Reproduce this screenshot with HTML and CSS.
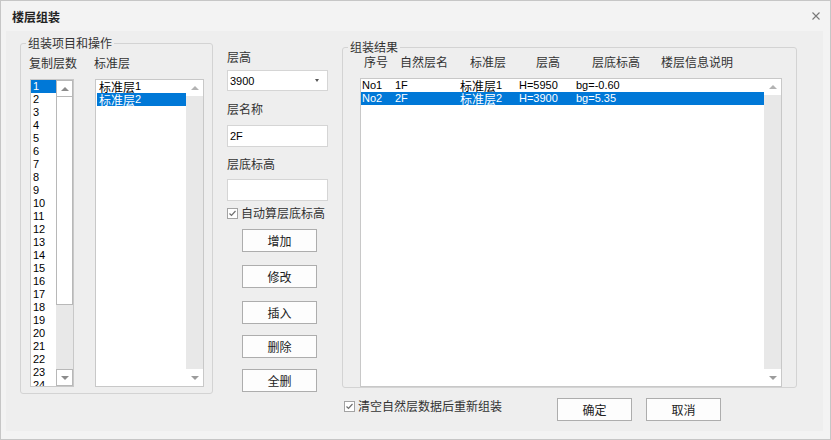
FILE: index.html
```html
<!DOCTYPE html>
<html>
<head>
<meta charset="utf-8">
<link rel="stylesheet" href="styles.css">
</head>
<body>
<div class="window">
  <div class="titlebar">
    <span class="title">楼层组装</span>
    <span class="close"><svg width="8" height="8" viewBox="0 0 8 8"><path d="M0.5 0.5L7.5 7.5M7.5 0.5L0.5 7.5" stroke="#777" stroke-width="1.1" fill="none"/></svg></span>
  </div>
  <div class="content">
    <div class="group left-group">
      <span class="legend">组装项目和操作</span>
      <div class="lg-cols">
        <div class="lg-col col-copy">
          <div class="glabel">复制层数</div>
          <div class="listbox lb-copy">
            <ul class="items">
              <li class="sel">1</li><li>2</li><li>3</li><li>4</li><li>5</li><li>6</li><li>7</li><li>8</li><li>9</li><li>10</li><li>11</li><li>12</li><li>13</li><li>14</li><li>15</li><li>16</li><li>17</li><li>18</li><li>19</li><li>20</li><li>21</li><li>22</li><li>23</li><li>24</li>
            </ul>
            <div class="sb enabled">
              <div class="sb-btn"><span class="tri-up"></span></div>
              <div class="thumb"></div>
              <div class="sb-track"></div>
              <div class="sb-btn"><span class="tri-down"></span></div>
            </div>
          </div>
        </div>
        <div class="lg-col col-std">
          <div class="glabel">标准层</div>
          <div class="listbox lb-std">
            <ul class="items">
              <li><span class="cjk">标准层</span><span>1</span></li>
              <li class="sel"><span class="cjk">标准层</span><span>2</span></li>
            </ul>
            <div class="sb">
              <div class="sb-btn"><span class="tri-up"></span></div>
              <div class="sb-track"></div>
              <div class="sb-btn"><span class="tri-down"></span></div>
            </div>
          </div>
        </div>
      </div>
    </div>

    <div class="mid">
      <div class="mlabel">层高</div>
      <div class="combo"><span>3900</span><span class="combo-arrow"></span></div>
      <div class="mlabel l2">层名称</div>
      <div class="field f1">2F</div>
      <div class="mlabel l3">层底标高</div>
      <div class="field f2"></div>
      <div class="check c1">
        <svg width="11" height="11" viewBox="0 0 11 11"><rect x="0.5" y="0.5" width="10" height="10" fill="#fff" stroke="#a3a3a3"/><path d="M2.5 5.5L4.5 7.5L8.5 3" stroke="#707070" stroke-width="1.2" fill="none"/></svg>
        <span>自动算层底标高</span>
      </div>
      <div class="mid-btns">
        <button class="btn">增加</button>
        <button class="btn g2">修改</button>
        <button class="btn g2">插入</button>
        <button class="btn">删除</button>
        <button class="btn">全删</button>
      </div>
    </div>

    <div class="right-col">
      <div class="group right-group">
        <span class="legend">组装结果</span>
        <div class="hdr">
          <span class="h1">序号</span>
          <span class="h2">自然层名</span>
          <span class="h3">标准层</span>
          <span class="h4">层高</span>
          <span class="h5">层底标高</span>
          <span class="h6">楼层信息说明</span>
        </div>
        <div class="listbox lb-res">
          <div class="rows">
            <div class="row">
              <span class="r1">No1</span><span class="r2">1F</span><span class="r3"><span class="cjk">标准层</span><span>1</span></span><span class="r4">H=5950</span><span class="r5">bg=-0.60</span>
            </div>
            <div class="row sel">
              <span class="r1">No2</span><span class="r2">2F</span><span class="r3"><span class="cjk">标准层</span><span>2</span></span><span class="r4">H=3900</span><span class="r5">bg=5.35</span>
            </div>
          </div>
          <div class="sb">
            <div class="sb-btn"><span class="tri-up"></span></div>
            <div class="sb-track"></div>
            <div class="sb-btn"><span class="tri-down"></span></div>
          </div>
        </div>
      </div>
      <div class="bottom">
        <div class="check c2">
          <svg width="11" height="11" viewBox="0 0 11 11"><rect x="0.5" y="0.5" width="10" height="10" fill="#fff" stroke="#a3a3a3"/><path d="M2.5 5.5L4.5 7.5L8.5 3" stroke="#707070" stroke-width="1.2" fill="none"/></svg>
          <span>清空自然层数据后重新组装</span>
        </div>
        <div class="actions">
          <button class="btn">确定</button>
          <button class="btn">取消</button>
        </div>
      </div>
    </div>
  </div>
</div>
</body>
</html>
```

FILE: styles.css
```css
* { box-sizing: border-box; }
html, body { margin: 0; padding: 0; }
body {
  width: 831px;
  height: 440px;
  background: #fff;
  font-family: "Noto Sans CJK SC", sans-serif;
  font-size: 12px;
  color: #333;
}
.window {
  width: 831px;
  height: 440px;
  border: 1px solid #c6c6c6;
  background: #f3f3f3;
  display: flex;
  flex-direction: column;
}
.titlebar {
  height: 30px;
  flex: none;
  display: flex;
  align-items: center;
  justify-content: space-between;
  padding: 0 10px 0 11px;
}
.title {
  font-weight: bold;
  font-size: 12px;
  line-height: 16px;
  color: #222;
  margin-top: 2px;
}
.close svg { display: block; }
.content {
  margin: 0 7px 0 5px;
  height: 400px;
  background: #eeeeee;
  display: grid;
  grid-template-columns: 193px 101px 455px;
  column-gap: 14px;
  padding-left: 14px;
  align-items: start;
}
.group {
  position: relative;
  border: 1px solid #d3d3d3;
  border-radius: 3px;
}
.legend {
  position: absolute;
  top: -8px;
  left: 5px;
  padding: 0 2px;
  background: #eeeeee;
  line-height: 14px;
  color: #333;
}
.left-group {
  margin-top: 12px;
  height: 351px;
  padding: 11px 0 0 9px;
}
.lg-cols { display: flex; gap: 21px; }
.lg-col { display: flex; flex-direction: column; gap: 8px; flex: none; }
.col-copy { width: 44px; }
.col-std { width: 109px; }
.glabel { line-height: 16px; margin-left: -1px; white-space: nowrap; }

.listbox {
  border: 1px solid #c8c8c8;
  background: #fff;
  display: flex;
}
.lb-copy { width: 44px; height: 308px; }
.lb-std { width: 109px; height: 308px; padding-left: 1px; }
.items {
  flex: 1;
  list-style: none;
  margin: 0;
  padding: 0;
  overflow: hidden;
  font-family: "Liberation Sans", "Noto Sans CJK SC", sans-serif;
  font-size: 11px;
  color: #000;
}
.items li {
  height: 13px;
  line-height: 13px;
  padding-left: 2px;
  white-space: nowrap;
  display: flex;
  align-items: center;
}
.items li.sel, .row.sel { background: #0078d7; color: #fff; }
.cjk { font-family: "Noto Sans CJK SC", sans-serif; font-size: 12px; line-height: 13px; }

.sb {
  width: 17px;
  flex: none;
  display: flex;
  flex-direction: column;
  background: #e8e8e8;
}
.sb-btn {
  height: 16px;
  flex: none;
  background: #fff;
  display: flex;
  align-items: center;
  justify-content: center;
}
.sb-btn:last-child { height: 17px; }
.sb-track { flex: 1; }
.tri-up {
  width: 0; height: 0;
  border-left: 4px solid transparent;
  border-right: 4px solid transparent;
  border-bottom: 4px solid #b3b3b3;
}
.tri-down {
  width: 0; height: 0;
  border-left: 4px solid transparent;
  border-right: 4px solid transparent;
  border-top: 4px solid #9c9c9c;
}
.sb.enabled .sb-btn { height: 17px; border: 1px solid #b8b8b8; }
.sb.enabled .thumb {
  height: 209px;
  flex: none;
  margin-top: -1px;
  border: 1px solid #b8b8b8;
  background: #fff;
}
.sb.enabled .tri-up { border-bottom-color: #8c8c8c; }
.sb.enabled .tri-down { border-top-color: #8c8c8c; }

.mid { padding-top: 18px; display: flex; flex-direction: column; }
.mlabel { line-height: 16px; }
.mlabel.l2 { margin-top: 10px; }
.mlabel.l3 { margin-top: 9px; }
.combo, .field {
  border: 1px solid #d5d5d5;
  background: #fff;
  font-family: "Liberation Sans", sans-serif;
  font-size: 11px;
  color: #000;
  display: flex;
  align-items: center;
}
.combo {
  margin-top: 5px;
  height: 21px;
  justify-content: space-between;
  padding: 0 8px 0 2px;
}
.combo-arrow {
  width: 0; height: 0;
  border-left: 2.5px solid transparent;
  border-right: 2.5px solid transparent;
  border-top: 3px solid #555;
}
.field { height: 22px; padding-left: 2px; }
.field.f1 { margin-top: 8px; }
.field.f2 { margin-top: 7px; }
.check {
  display: flex;
  align-items: center;
  gap: 3px;
  line-height: 16px;
  color: #333;
  white-space: nowrap;
}
.check svg { display: block; flex: none; }
.check.c1 { margin-top: 4px; }
.mid-btns {
  display: flex;
  flex-direction: column;
  gap: 11px;
  margin: 8px 0 0 15px;
}
.btn {
  width: 75px;
  height: 23px;
  margin: 0;
  padding: 0;
  border: 1px solid #adadad;
  background: #fdfdfd;
  font-family: "Noto Sans CJK SC", sans-serif;
  font-size: 12px;
  color: #222;
  display: flex;
  align-items: center;
  justify-content: center;
}
.btn.g2 { margin-top: 2px; }

.right-col { display: flex; flex-direction: column; margin-top: 16px; }
.right-group { height: 341px; padding: 6px 0 0 17px; }
.hdr { display: flex; line-height: 16px; padding-left: 4px; color: #333; white-space: nowrap; }
.hdr .h1 { width: 36px; }
.hdr .h2 { width: 70px; }
.hdr .h3 { width: 66px; }
.hdr .h4 { width: 56px; }
.hdr .h5 { width: 69px; }
.lb-res { width: 422px; height: 309px; margin-top: 8px; }
.rows {
  flex: 1;
  font-family: "Liberation Sans", "Noto Sans CJK SC", sans-serif;
  font-size: 11px;
  color: #000;
}
.row {
  display: flex;
  align-items: center;
  height: 13px;
  line-height: 13px;
  padding-left: 1px;
  white-space: nowrap;
}
.row > span { flex: none; }
.row .r1 { width: 33px; }
.row .r2 { width: 65px; }
.row .r3 { width: 59px; display: flex; align-items: center; }
.row .r4 { width: 57px; }

.bottom { display: flex; align-items: flex-start; margin-top: 10px; }
.check.c2 { margin-left: 2px; }
.actions { display: flex; gap: 14px; margin-left: auto; margin-right: 76px; }
```
